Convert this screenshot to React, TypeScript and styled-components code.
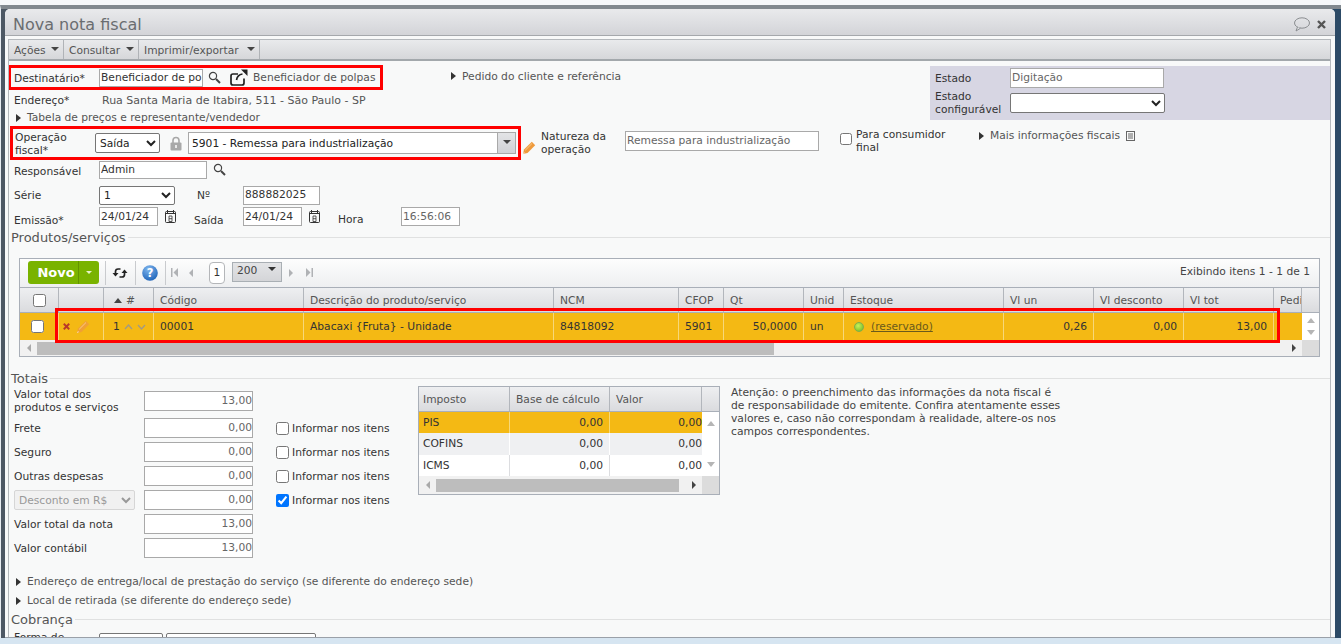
import React from "react";
import styled, { createGlobalStyle } from "styled-components";

const Global = createGlobalStyle`
  html, body { margin: 0; padding: 0; width: 1341px; height: 644px; overflow: hidden; background: #d6e5f1; }
  body { font-family: "DejaVu Sans", Verdana, sans-serif; font-size: 10.7px; color: #333; }
  * { box-sizing: border-box; }
`;

const Page = styled.div`
  width: 1341px; height: 644px; overflow: hidden; display: flex; flex-direction: column;
  padding-top: 5px; background: linear-gradient(#f6f8fa 5px, #d6e5f1 5px);
`;
const Desktop = styled.div`
  height: 633px; padding: 0 6px 0 4px; border-left: 1px solid #e8edf2; flex: none;
  background: linear-gradient(90deg, #4d5864 0, #4d5864 50%, #2c4a66 50%, #2c4a66 100%);
  border-top: 4px solid #82898f;
`;
const Win = styled.div`
  height: 629px; background: #f8f9f9; border-radius: 5px 5px 0 0; overflow: hidden;
  display: flex; flex-direction: column; border-bottom: 1px solid #9aa0a8;
`;
const Title = styled.div`
  height: 27px; flex: none; display: flex; align-items: center; justify-content: space-between;
  padding: 4px 9px 0 8px; font-size: 16px; color: #6a6d70;
  background: linear-gradient(#e9eaec, #d3d4d8); border-bottom: 1px solid #a5a8ac;
`;
const TitleIcons = styled.div`display: flex; align-items: center; gap: 7px;`;
const Panel = styled.div`
  flex: 1; margin: 3px 4px 0 3px; border: 1px solid #b4b8bc; border-bottom: 0; min-height: 0; overflow: hidden;
`;
const Menu = styled.div`
  height: 21px; display: flex; background: linear-gradient(#e9eaec, #d6d7da); border-bottom: 2px solid #a3a8ac;
`;
const MenuItem = styled.div<{ $w: number }>`
  width: ${p => p.$w}px; display: flex; align-items: center; justify-content: space-between; padding: 1px 4px 0 5px;
  border-right: 1px solid #b0b3b7; color: #555; white-space: nowrap;
`;
const Caret = styled.i<{ $c?: string; $s?: number }>`
  display: inline-block; width: 0; height: 0; margin-bottom: 3px;
  border-left: ${p => p.$s ?? 4}px solid transparent; border-right: ${p => p.$s ?? 4}px solid transparent;
  border-top: ${p => p.$s ?? 4}px solid ${p => p.$c ?? "#444"};
`;
const Content = styled.div`padding-top: 4px; height: 600px; overflow: hidden;`;

const Top = styled.div`display: flex; height: 61px; align-items: flex-start;`;
const TopLeft = styled.div`width: 442px; flex: none;`;
const RedBox = styled.div<{ $w: number; $h: number; $ml?: number; $pl?: number }>`
  width: ${p => p.$w}px; height: ${p => p.$h}px; margin-left: ${p => p.$ml ?? 0}px; border: 3px solid #f00;
  display: flex; align-items: center; flex: none; padding-left: ${p => p.$pl ?? 2}px;
`;
const Label = styled.div<{ $w?: number; $ml?: number; $mt?: number }>`
  width: ${p => (p.$w ? p.$w + "px" : "auto")}; margin-left: ${p => p.$ml ?? 0}px; margin-top: ${p => p.$mt ?? 0}px;
  flex: none; line-height: 13px; color: #333;
`;
const Field = styled.input<{ $w: number; $h?: number; $ml?: number; $right?: boolean; $dark?: boolean }>`
  width: ${p => p.$w}px; height: ${p => p.$h ?? 20}px; margin: 0 0 0 ${p => p.$ml ?? 0}px; flex: none;
  border: 1px solid #a9a9a9; background: #fff; padding: 0 0 1px 1px; outline: 0; border-radius: 0;
  color: ${p => (p.$dark ? "#333" : "#666")};
  font: 10.7px "DejaVu Sans", Verdana, sans-serif; text-align: ${p => (p.$right ? "right" : "left")};
`;
const Pick = styled.select<{ $w: number; $h?: number; $ml?: number; $mt?: number; $mr?: number }>`
  width: ${p => p.$w}px; height: ${p => p.$h ?? 20}px; margin: ${p => p.$mt ?? 0}px ${p => p.$mr ?? 0}px 0 ${p => p.$ml ?? 0}px; flex: none;
  font: 10.7px "DejaVu Sans", Verdana, sans-serif; color: #222; background: #fff; border-radius: 2px;
  border: 1px solid #767676; padding: 0;
  &:disabled { color: #999; border-color: #d6d6d6; background: #f1f1f1; opacity: 1; }
`;
const RowLine = styled.div<{ $h: number; $top?: boolean; $pt?: number }>`
  height: ${p => p.$h}px; display: flex; align-items: ${p => (p.$top ? "flex-start" : "center")};
  padding: ${p => p.$pt ?? 0}px 0 0 5px; flex: none;
`;
const Expander = styled.div<{ $h?: number; $pl?: number; $mt?: number }>`
  height: ${p => p.$h ?? 15}px; display: flex; align-items: center; gap: 6px; color: #555; white-space: nowrap;
  padding-left: ${p => p.$pl ?? 7}px; flex: none; margin-top: ${p => p.$mt ?? 0}px;
`;
const Tri = styled.i`
  display: inline-block; width: 0; height: 0; border-top: 4px solid transparent; border-bottom: 4px solid transparent;
  border-left: 5px solid #333;
`;
const Plain = styled.span<{ $ml?: number; $fs?: number }>`
  margin-left: ${p => p.$ml ?? 0}px; color: #555; white-space: nowrap; flex: none; font-size: ${p => p.$fs ?? 10.7}px;
`;
const Pedido = styled.div`width: 479px; flex: none; padding-top: 1px; height: 21px;`;
const Estado = styled.div`
  width: 401px; height: 54px; margin-top: 1px; background: #d7d6e3; padding: 1px 0 0 5px; display: grid; flex: none;
  grid-template-columns: 75px 155px; grid-template-rows: 22px 22px; align-items: center; row-gap: 3px;
`;
const OpRow = styled.div`display: flex; align-items: flex-start; height: 34px;`;
const ComboBox = styled.div`
  width: 328px; height: 22px; margin-left: 6px; border: 1px solid #a9a9a9; background: #fff; display: flex; flex: none;
  align-items: stretch; color: #222;
`;
const ComboText = styled.div`flex: 1; padding: 0 3px; display: flex; align-items: center; white-space: nowrap;`;
const ComboBtn = styled.div`
  width: 18px; border-left: 1px solid #a9a9a9; background: linear-gradient(#e3e4e6, #d0d1d5);
  display: flex; align-items: center; justify-content: center;
`;
const Nature = styled.div`display: flex; align-items: flex-start; padding-top: 5px;`;
const Check = styled.input<{ $s?: number; $ml?: number; $mt?: number }>`
  width: ${p => p.$s ?? 13}px; height: ${p => p.$s ?? 13}px; margin: ${p => p.$mt ?? 0}px 0 0 ${p => p.$ml ?? 0}px; flex: none; accent-color: #0075ff;
`;
const Section = styled.div<{ $h: number }>`
  height: ${p => p.$h}px; display: flex; align-items: center; gap: 2px; padding-left: 2px; font-size: 13px; color: #555; flex: none;
  &::after { content: ""; flex: 1; height: 1px; background: #e0e1e1; margin-top: 1px; }
`;
const Gap = styled.div<{ $h: number }>`height: ${p => p.$h}px; flex: none;`;
const Grid = styled.div`
  position: relative; width: 1301px; margin-left: 10px; height: 99px; border: 1px solid #a9afb8; background: #fff;
`;
const Toolbar = styled.div`
  height: 28px; display: flex; align-items: center; padding: 0 0 1px 8px; position: relative;
  background: linear-gradient(#fdfdfd, #eeeff1);
`;
const Novo = styled.div`
  width: 71px; height: 23px; background: #79b300; border-radius: 3px; color: #fff; font-weight: bold; font-size: 13px;
  display: flex; align-items: stretch; flex: none;
`;
const NovoText = styled.div`width: 51px; padding-left: 6px; display: flex; align-items: center; justify-content: center; border-right: 1px solid #639300;`;
const NovoArrow = styled.div`flex: 1; display: flex; align-items: center; justify-content: center; padding-top: 3px;`;
const TbSep = styled.div<{ $ml: number }>`width: 1px; height: 24px; background: #c9cbce; margin-left: ${p => p.$ml}px; flex: none;`;
const TbIcon = styled.div<{ $ml: number; $w?: number; $mt?: number }>`
  margin: ${p => p.$mt ?? 0}px 0 0 ${p => p.$ml}px; width: ${p => (p.$w !== undefined ? p.$w + "px" : "auto")}; display: flex; align-items: center; justify-content: center; flex: none;
`;
const PagePill = styled.div`
  width: 16px; height: 22px; border: 1px solid #b4b6b9; border-radius: 4px; background: #fff; margin-left: 6px; flex: none;
  display: flex; align-items: center; justify-content: center; color: #333;
`;
const PageSize = styled.div`
  width: 50px; height: 20px; border: 1px solid #a9afb4; background: linear-gradient(#e3e4e6, #d4d5d8); margin: -2px 0 0 7px; flex: none;
  display: flex; align-items: center; justify-content: space-between; padding: 0 5px 2px 4px; color: #444;
`;
const Showing = styled.div`margin-left: auto; padding-right: 9px; padding-bottom: 2px; color: #444; white-space: nowrap;`;
const cols = "39px 45px 50px 150px 250px 125px 45px 80px 40px 160px 90px 90px 90px 28px 17px";
const HeadRow = styled.div`
  display: grid; grid-template-columns: ${cols}; height: 26px;
  background: linear-gradient(#eeeff1, #dadbde); border-top: 1px solid #a9afb8; border-bottom: 1px solid #a9afb8;
`;
const HeadCell = styled.div<{ $center?: boolean; $pad?: number }>`
  display: flex; align-items: center; justify-content: ${p => (p.$center ? "center" : "flex-start")}; padding-left: ${p => p.$pad ?? 6}px;
  border-right: 1px solid #b2b6bc; color: #555; white-space: nowrap; overflow: hidden; gap: 4px;
  &:last-child { border-right: 0; }
`;
const DataRow = styled.div`display: grid; grid-template-columns: ${cols}; height: 27px; background: #f4b914;`;
const DataCell = styled.div<{ $right?: boolean; $pad?: number; $gap?: number }>`
  display: flex; align-items: center; justify-content: ${p => (p.$right ? "flex-end" : "flex-start")}; gap: ${p => p.$gap ?? 0}px;
  padding: 0 6px 0 ${p => p.$pad ?? 6}px; border-right: 1px solid #f7d879; color: #333; white-space: nowrap; overflow: hidden;
`;
const NoLine = styled(DataCell)`border-right: 0;`;
const VScroll = styled.div<{ $gap?: number }>`
  background: #fff; display: flex; flex-direction: column; align-items: center; justify-content: center; gap: ${p => p.$gap ?? 7}px;
`;
const UpTri = styled.i<{ $c?: string }>`width: 0; height: 0; border-left: 4px solid transparent; border-right: 4px solid transparent; border-bottom: 5px solid ${p => p.$c ?? "#b5b5b5"};`;
const DownTri = styled.i`width: 0; height: 0; border-left: 4px solid transparent; border-right: 4px solid transparent; border-top: 5px solid #b5b5b5;`;
const HScroll = styled.div<{ $h: number }>`
  height: ${p => p.$h}px; display: flex; align-items: center; background: #f1f1f1; position: relative;
`;
const ArrowBox = styled.div`width: 17px; display: flex; align-items: center; justify-content: center; flex: none;`;
const Thumb = styled.div<{ $w: number; $h: number }>`width: ${p => p.$w}px; height: ${p => p.$h}px; background: #bdbdbd; flex: none;`;
const Spacer = styled.div`flex: 1;`;
const Corner = styled.div`width: 17px; height: 100%; background: #dcdcdc; flex: none;`;
const LeftTri = styled.i<{ $c?: string }>`width: 0; height: 0; border-top: 4px solid transparent; border-bottom: 4px solid transparent; border-right: 4px solid ${p => p.$c ?? "#a9a9a9"};`;
const RightTri = styled.i<{ $c?: string }>`width: 0; height: 0; border-top: 4px solid transparent; border-bottom: 4px solid transparent; border-left: 4px solid ${p => p.$c ?? "#444"};`;
const RowMark = styled.div`
  position: absolute; left: 35px; top: 49px; width: 1225px; height: 35px; border: 3px solid #f00; pointer-events: none;
`;
const Under = styled.u`color: #6a5a1c;`;
const Dot = styled.i`
  width: 10px; height: 10px; border-radius: 50%; background: radial-gradient(circle at 40% 35%, #c6f15e, #6db71a); border: 1px solid #7fae4c; flex: none; margin-right: 7px;
`;
const Totals = styled.div`display: flex; align-items: flex-start; height: 187px; flex: none;`;
const TotalsCol = styled.div`width: 409px; flex: none; padding-left: 5px;`;
const TotalRow = styled.div<{ $h?: number; $pt?: number }>`
  height: ${p => p.$h ?? 24}px; padding-top: ${p => p.$pt ?? 0}px; display: flex; align-items: center;
`;
const TotalLabel = styled.div`width: 130px; flex: none; line-height: 13px; color: #333;`;
const CheckWrap = styled.label`display: flex; align-items: center; gap: 3px; margin-left: 23px; white-space: nowrap; color: #333;`;
const TaxTable = styled.div`width: 302px; height: 109px; margin-top: 1px; border: 1px solid #a9afb8; background: #fff; flex: none;`;
const taxCols = "91px 100px 92px 17px";
const TaxHead = styled.div`
  display: grid; grid-template-columns: ${taxCols}; height: 25px; border-bottom: 1px solid #a9afb8; background: linear-gradient(#eeeff1, #dadbde);
`;
const TaxRows = styled.div`display: grid; grid-template-columns: 283px 17px; height: 64px;`;
const TaxRow = styled.div<{ $bg: string; $line: string }>`
  display: grid; grid-template-columns: 91px 100px 92px; height: 21.33px; background: ${p => p.$bg};
  & > div { border-right: 1px solid ${p => p.$line}; }
  & > div:last-child { border-right: 0; padding-right: 0; }
`;
const TaxCell = styled.div<{ $right?: boolean }>`
  display: flex; align-items: center; padding: 0 6px 0 4px; justify-content: ${p => (p.$right ? "flex-end" : "flex-start")}; color: #333;
`;
const Note = styled.div`
  width: 340px; margin-left: 11px; line-height: 13px; font-size: 10.75px; color: #444; flex: none; white-space: nowrap; padding-top: 1px;
`;
const BottomRow = styled.div`display: flex; align-items: flex-start; padding-left: 5px; height: 24px; overflow: hidden;`;

const Search = () => (
  <svg width="13" height="13" viewBox="0 0 13 13" fill="none" stroke="#444" strokeWidth="1.2">
    <circle cx="5" cy="5" r="3.6" /><path d="M8 8l4 4" strokeWidth="2" />
  </svg>
);
const External = () => (
  <svg width="18" height="17" viewBox="0 0 18 17" fill="none" stroke="#222" strokeWidth="1.7">
    <path d="M14 9.500V14a2 2 0 0 1-2 2H3a2 2 0 0 1-2-2V7a2 2 0 0 1 2-2h5" />
    <path d="M6.500 11c.5-3 2.500-5.500 6-6" /><path d="M11 .5h6.500V7z" fill="#222" stroke="none" />
  </svg>
);
const Lock = () => (
  <svg width="12" height="15" viewBox="0 0 12 15">
    <path d="M3 7V4.500a3 3 0 0 1 6 0V7" fill="none" stroke="#a8a8a8" strokeWidth="1.6" />
    <rect x=".5" y="6.500" width="11" height="8" rx="1" fill="#a8a8a8" /><rect x="5" y="9" width="2" height="3" fill="#e8e8e8" />
  </svg>
);
const Pencil = ({ c = "#ef9a3c" }: { c?: string }) => (
  <svg width="14" height="14" viewBox="0 0 14 14" fill="none">
    <path d="M1 13l1-4.500L9.800.8l3.400 3.400L5.500 12z" fill={c} />
    <path d="M3.200 9.300l6.800-6.800" stroke="#fbdca8" strokeWidth=".7" />
    <path d="M1 13l1-1.800 .8.800z" fill="#fff" />
  </svg>
);
const Cal = () => (
  <svg width="13" height="14" viewBox="0 0 13 14" fill="none" stroke="#333">
    <rect x="1.500" y="1.500" width="10" height="11" rx="1" /><path d="M3.500 0v3M9.500 0v3M1.500 3.500h10" />
    <path d="M5 6h3v5.500H5zM5 8.700h3" strokeWidth=".8" />
  </svg>
);
const Bubble = () => (
  <svg width="17" height="15" viewBox="0 0 17 15" fill="none" stroke="#8a8d90">
    <ellipse cx="9" cy="6" rx="7.500" ry="5.200" /><path d="M4.500 10L3 14l4.500-2.800" fill="#e4e5e7" />
  </svg>
);
const CloseX = ({ c = "#555", s = 9 }: { c?: string; s?: number }) => (
  <svg width={s} height={s} viewBox="0 0 9 9" stroke={c} strokeWidth="2.400"><path d="M1 1l7 7M8 1L1 8" /></svg>
);
const NoteIcon = () => (
  <svg width="9" height="10" viewBox="0 0 9 10" fill="none" stroke="#666"><rect x=".5" y=".5" width="8" height="9" /><path d="M2 3h5M2 5h5M2 7h5" /></svg>
);
const Refresh = () => (
  <svg width="16" height="14" viewBox="0 0 16 14" fill="none" stroke="#222" strokeWidth="1.700">
    <path d="M3.500 8V5.500C3.500 3.500 5 3 6 3h2.500" /><path d="M12.500 6v2.500c0 2-1.500 2.500-2.500 2.500H7.500" />
    <path d="M.5 7h6L3.500 10.500z" fill="#222" stroke="none" /><path d="M9.500 7h6L12.500 3.500z" fill="#222" stroke="none" />
  </svg>
);
const Help = () => (
  <svg width="16" height="16" viewBox="0 0 16 16">
    <defs><radialGradient id="hg" cx=".4" cy=".25" r=".8"><stop offset="0" stopColor="#7fb6ee" /><stop offset="1" stopColor="#1c62b8" /></radialGradient></defs>
    <circle cx="8" cy="8" r="7.800" fill="url(#hg)" />
    <text x="8" y="12" fontSize="11.500" fontWeight="bold" fontFamily="DejaVu Sans" textAnchor="middle" fill="#fff">?</text>
  </svg>
);
const PagerEnd = ({ flip }: { flip?: boolean }) => (
  <svg width="7" height="9" viewBox="0 0 7 9" fill="#b0b2b5" style={flip ? { transform: "scaleX(-1)" } : undefined}>
    <rect x="0" y="0" width="1.500" height="9" /><path d="M7 0v9L2.500 4.500z" />
  </svg>
);
const Chevron = ({ up }: { up?: boolean }) => (
  <svg width="9" height="6" viewBox="0 0 9 6" fill="none" stroke="#a09a86" strokeWidth="1.300"><path d={up ? "M1 5l3.500-4L8 5" : "M1 1l3.500 4L8 1"} /></svg>
);

const headers = ["Código", "Descrição do produto/serviço", "NCM", "CFOP", "Qt", "Unid", "Estoque", "Vl un", "Vl desconto", "Vl tot", "Pedi"];
const totals = ["Frete", "Seguro", "Outras despesas"];
const taxes = [
  { n: "PIS", bg: "#f4b914", line: "#f7d879" },
  { n: "COFINS", bg: "#eff0f2", line: "#fff" },
  { n: "ICMS", bg: "#fff", line: "#dcdde0" },
];

export default function App() {
  return (
    <Page>
      <Global />
      <Desktop>
        <Win>
          <Title>
            <span>Nova nota fiscal</span>
            <TitleIcons><Bubble /><CloseX /></TitleIcons>
          </Title>
          <Panel>
            <Menu>
              <MenuItem $w={55}>Ações <Caret /></MenuItem>
              <MenuItem $w={75}>Consultar <Caret /></MenuItem>
              <MenuItem $w={121}>Imprimir/exportar <Caret /></MenuItem>
            </Menu>
            <Content>
              <Top>
                <TopLeft>
                  <RedBox $w={375} $h={25} $ml={-1} $pl={3}>
                    <Label $w={85} $mt={1}>Destinatário*</Label>
                    <Field $w={104} $h={18} $dark value="Beneficiador de po" readOnly />
                    <TbIcon $ml={5}><Search /></TbIcon>
                    <TbIcon $ml={9}><External /></TbIcon>
                    <Plain $ml={5}>Beneficiador de polpas</Plain>
                  </RedBox>
                  <RowLine $h={20}><Label $w={88}>Endereço*</Label><Plain $fs={11}>Rua Santa Maria de Itabira, 511 - São Paulo - SP</Plain></RowLine>
                  <Expander><Tri /> Tabela de preços e representante/vendedor</Expander>
                </TopLeft>
                <Pedido><Expander $h={20} $pl={0}><Tri /> Pedido do cliente e referência</Expander></Pedido>
                <Estado>
                  <Label $mt={1}>Estado</Label>
                  <Field $w={154} $h={20} value="Digitação" readOnly />
                  <Label>Estado<br />configurável</Label>
                  <Pick $w={155} $h={20}><option></option></Pick>
                </Estado>
              </Top>
              <OpRow>
                <RedBox $w={511} $h={34} $ml={1}>
                  <Label $w={80} $mt={2}>Operação<br />fiscal*</Label>
                  <Pick $w={65} $h={20}><option>Saída</option></Pick>
                  <TbIcon $ml={10}><Lock /></TbIcon>
                  <ComboBox><ComboText>5901 - Remessa para industrialização</ComboText><ComboBtn><Caret $c="#444" $s={4} /></ComboBtn></ComboBox>
                </RedBox>
                <Nature>
                  <TbIcon $ml={1} $mt={10}><Pencil /></TbIcon>
                  <Label $w={84} $ml={5} $mt={-1}>Natureza da<br />operação</Label>
                  <Field $w={194} $h={20} value="Remessa para industrialização" readOnly />
                  <Check type="checkbox" $s={12} $ml={21} $mt={2} />
                  <Label $w={123} $ml={4} $mt={-3}>Para consumidor<br />final</Label>
                  <Expander $pl={0} $h={13} $mt={-2}><Tri /> Mais informações fiscais <NoteIcon /></Expander>
                </Nature>
              </OpRow>
              <RowLine $h={23} $top $pt={1}>
                <Label $w={85} $mt={4}>Responsável</Label>
                <Field $w={108} $h={18} $dark value="Admin" readOnly />
                <TbIcon $ml={6} $mt={2}><Search /></TbIcon>
              </RowLine>
              <RowLine $h={24}>
                <Label $w={85}>Série</Label>
                <Pick $w={76} $h={19}><option>1</option></Pick>
                <Label $w={46} $ml={22}>Nº</Label>
                <Field $w={77} $h={19} $dark value="888882025" readOnly />
              </RowLine>
              <RowLine $h={23} $top>
                <Label $w={85} $mt={7}>Emissão*</Label>
                <Field $w={59} $h={19} $dark value="24/01/24" readOnly />
                <TbIcon $ml={6} $mt={3}><Cal /></TbIcon>
                <Label $w={49} $ml={17} $mt={7}>Saída</Label>
                <Field $w={59} $h={19} $dark value="24/01/24" readOnly />
                <TbIcon $ml={6} $mt={3}><Cal /></TbIcon>
                <Label $w={63} $ml={17} $mt={6}>Hora</Label>
                <Field $w={59} $h={19} value="16:56:06" readOnly />
              </RowLine>
              <Section $h={14}>Produtos/serviços</Section>
              <Gap $h={14} />
              <Grid>
                <Toolbar>
                  <Novo><NovoText>Novo</NovoText><NovoArrow><Caret $c="#e8f3c8" $s={3} /></NovoArrow></Novo>
                  <TbSep $ml={6} />
                  <TbIcon $ml={6}><Refresh /></TbIcon>
                  <TbSep $ml={7} />
                  <TbIcon $ml={6}><Help /></TbIcon>
                  <TbSep $ml={7} />
                  <TbIcon $ml={5}><PagerEnd /></TbIcon>
                  <TbIcon $ml={11}><LeftTri $c="#b0b2b5" /></TbIcon>
                  <TbIcon $ml={0} $w={10} />
                  <PagePill>1</PagePill>
                  <PageSize>200 <Caret $c="#333" $s={4} /></PageSize>
                  <TbIcon $ml={7}><RightTri $c="#b0b2b5" /></TbIcon>
                  <TbIcon $ml={13}><PagerEnd flip /></TbIcon>
                  <Showing>Exibindo itens 1 - 1 de 1</Showing>
                </Toolbar>
                <HeadRow>
                  <HeadCell $center $pad={0}><Check type="checkbox" /></HeadCell>
                  <HeadCell />
                  <HeadCell $pad={10}><UpTri $c="#444" /> #</HeadCell>
                  {headers.map(h => <HeadCell key={h}>{h}</HeadCell>)}
                  <HeadCell />
                </HeadRow>
                <DataRow>
                  <DataCell $pad={11}><Check type="checkbox" /></DataCell>
                  <DataCell $pad={4} $gap={6}><CloseX c="#b83a2a" s={7} /><Pencil c="#f0a035" /></DataCell>
                  <DataCell $pad={9} $gap={4}>1 <Chevron up /><Chevron /></DataCell>
                  <DataCell>00001</DataCell>
                  <DataCell>Abacaxi {"{Fruta}"} - Unidade</DataCell>
                  <DataCell>84818092</DataCell>
                  <DataCell>5901</DataCell>
                  <DataCell $right>50,0000</DataCell>
                  <DataCell>un</DataCell>
                  <DataCell $pad={10}><Dot /><Under>(reservado)</Under></DataCell>
                  <DataCell $right>0,26</DataCell>
                  <DataCell $right>0,00</DataCell>
                  <DataCell $right>13,00</DataCell>
                  <NoLine />
                  <VScroll><UpTri /><DownTri /></VScroll>
                </DataRow>
                <HScroll $h={16}>
                  <ArrowBox><LeftTri /></ArrowBox>
                  <Thumb $w={737} $h={13} />
                  <Spacer />
                  <ArrowBox><RightTri /></ArrowBox>
                  <Corner />
                </HScroll>
                <RowMark />
              </Grid>
              <Gap $h={14} />
              <Section $h={14}>Totais</Section>
              <Totals>
                <TotalsCol>
                  <TotalRow $h={31} $pt={1}>
                    <TotalLabel>Valor total dos<br />produtos e serviços</TotalLabel>
                    <Field $w={109} $right value="13,00" readOnly />
                  </TotalRow>
                  {totals.map(t => (
                    <TotalRow key={t}>
                      <TotalLabel>{t}</TotalLabel>
                      <Field $w={109} $right value="0,00" readOnly />
                      <CheckWrap><Check type="checkbox" />Informar nos itens</CheckWrap>
                    </TotalRow>
                  ))}
                  <TotalRow>
                    <Pick $w={121} $h={20} $mr={9} disabled><option>Desconto em R$</option></Pick>
                    <Field $w={109} $right value="0,00" readOnly />
                    <CheckWrap><Check type="checkbox" defaultChecked />Informar nos itens</CheckWrap>
                  </TotalRow>
                  <TotalRow><TotalLabel>Valor total da nota</TotalLabel><Field $w={109} $right value="13,00" readOnly /></TotalRow>
                  <TotalRow><TotalLabel>Valor contábil</TotalLabel><Field $w={109} $right value="13,00" readOnly /></TotalRow>
                </TotalsCol>
                <TaxTable>
                  <TaxHead>
                    <HeadCell $pad={4}>Imposto</HeadCell>
                    <HeadCell>Base de cálculo</HeadCell>
                    <HeadCell>Valor</HeadCell>
                    <HeadCell />
                  </TaxHead>
                  <TaxRows>
                    <div>
                      {taxes.map(t => (
                        <TaxRow key={t.n} $bg={t.bg} $line={t.line}>
                          <TaxCell>{t.n}</TaxCell><TaxCell $right>0,00</TaxCell><TaxCell $right>0,00</TaxCell>
                        </TaxRow>
                      ))}
                    </div>
                    <VScroll $gap={36}><UpTri /><DownTri /></VScroll>
                  </TaxRows>
                  <HScroll $h={18}>
                    <ArrowBox><LeftTri /></ArrowBox>
                    <Thumb $w={243} $h={13} />
                    <Spacer />
                    <ArrowBox><RightTri /></ArrowBox>
                    <Corner />
                  </HScroll>
                </TaxTable>
                <Note>
                  Atenção: o preenchimento das informações da nota fiscal é<br />
                  de responsabilidade do emitente. Confira atentamente esses<br />
                  valores e, caso não correspondam à realidade, altere-os nos<br />
                  campos correspondentes.
                </Note>
              </Totals>
              <Expander $h={19}><Tri /> Endereço de entrega/local de prestação do serviço (se diferente do endereço sede)</Expander>
              <Expander $h={19}><Tri /> Local de retirada (se diferente do endereço sede)</Expander>
              <Section $h={18}>Cobrança</Section>
              <BottomRow>
                <Label $w={85} $mt={3}>Forma de</Label>
                <Pick $w={64} $h={20} $mt={5}><option></option></Pick>
                <Pick $w={150} $h={20} $ml={3} $mt={5}><option></option></Pick>
              </BottomRow>
            </Content>
          </Panel>
        </Win>
      </Desktop>
    </Page>
  );
}
